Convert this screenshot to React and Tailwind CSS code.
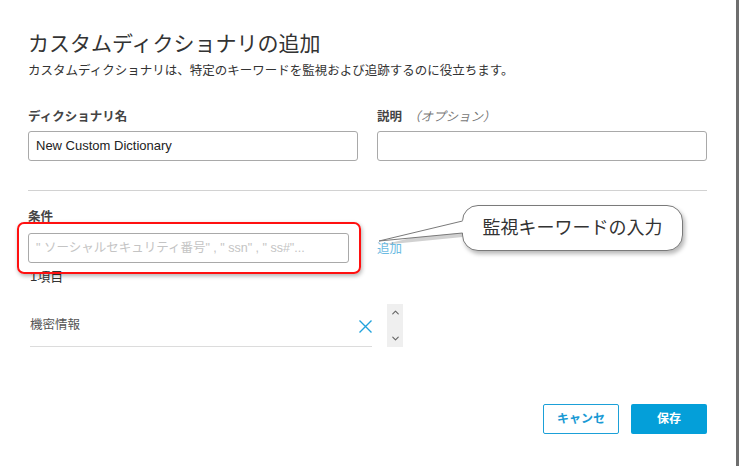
import { ChevronUp, ChevronDown } from 'lucide-react'

const font = { fontFamily: '"Liberation Sans", "Noto Sans CJK JP", sans-serif' }

function Callout() {
  return (
    <>
      <svg className="absolute left-[370px] top-[212px]" width="100" height="40" viewBox="0 0 100 40">
        <path d="M92 11 L11 31 L92 23 Z" fill="rgba(0,0,0,0.18)" transform="translate(1 2)" />
      </svg>
      <div className="absolute left-[462px] top-[205px] flex h-[46px] w-[221px] items-center justify-center rounded-[16px] border border-[#7a7a7a] bg-white shadow-[2px_3px_4px_rgba(0,0,0,0.28)]">
        <span className="text-[18px] leading-[22px] text-[#333]">監視キーワードの入力</span>
      </div>
      <svg className="absolute left-[370px] top-[212px]" width="100" height="40" viewBox="0 0 100 40">
        <path d="M96 8 L91 9 L9 29 L91 21 L96 21 Z" fill="#fff" />
        <path d="M92.5 9 L9 29 L92.5 21" fill="none" stroke="#7a7a7a" strokeWidth="1" />
      </svg>
    </>
  )
}

export default function App() {
  return (
    <div className="relative flex h-[466px] w-[739px] overflow-hidden bg-white" style={font}>
      <div className="flex-1 pl-[28px] pr-[29px] pt-[31px]">
        <h1 className="text-[21px] font-normal leading-[26px] text-[#333]">カスタムディクショナリの追加</h1>
        <p className="mt-[5px] text-[12.5px] leading-[18px] text-[#333]">
          カスタムディクショナリは、特定のキーワードを監視および追跡するのに役立ちます。
        </p>

        <div className="mt-[28px] grid grid-cols-2 gap-x-[19px]">
          <div>
            <label className="block text-[12.5px] font-bold leading-[18px] text-[#444]">ディクショナリ名</label>
            <div className="mt-[5px] flex h-[30px] items-center rounded-[3px] border border-[#a9a9a9] px-[7px] text-[13px] text-[#222]">
              New Custom Dictionary
            </div>
          </div>
          <div>
            <label className="block text-[12.5px] leading-[18px] text-[#444]">
              <span className="font-bold">説明</span>
              <span className="ml-[6px] italic text-[#777]">（オプション）</span>
            </label>
            <div className="mt-[5px] h-[30px] rounded-[3px] border border-[#a9a9a9]" />
          </div>
        </div>

        <div className="mt-[29px] h-px bg-[#d2d2d2]" />

        <label className="mt-[17px] block text-[12.5px] font-bold leading-[18px] text-[#444]">条件</label>
        <div className="mt-[7px] flex items-center">
          <div className="flex h-[30px] w-[321px] items-center whitespace-pre rounded-[3px] border border-[#a9a9a9] px-[7px] text-[12.5px] text-[#c4c4c4]">
            {'" ソーシャルセキュリティ番号" , " ssn" , " ss#"...'}
          </div>
          <span className="ml-[28px] mt-[3px] text-[12.5px] text-[#6cbbe2]">追加</span>
        </div>

        <p className="ml-[2px] mt-[5px] text-[13px] leading-[18px] text-[#333]">1項目</p>

        <div className="mt-[18px] flex items-start">
          <div className="ml-[2px] flex h-[43px] w-[342px] items-center justify-between border-b border-[#dcdcdc]">
            <span className="text-[12.5px] text-[#555]">機密情報</span>
            <svg width="13" height="13" viewBox="0 0 13 13" className="mt-[2px]">
              <path d="M0.5 0.5 L12.5 12.5 M12.5 0.5 L0.5 12.5" stroke="#22a2dc" strokeWidth="1.4" fill="none" />
            </svg>
          </div>
          <div className="ml-[15px] flex h-[43px] w-[16px] flex-col items-center justify-between bg-[#efefef] py-[3px]">
            <ChevronUp size={11} strokeWidth={2.5} className="text-[#666]" />
            <ChevronDown size={11} strokeWidth={2.5} className="text-[#666]" />
          </div>
        </div>

        <div className="mt-[57px] flex justify-end gap-[12px]">
          <button
            type="button"
            className="h-[30px] w-[76px] rounded-[2px] border border-[#1ba0d8] bg-white text-[12px] font-bold text-[#1a9ad4]"
          >
            キャンセ
          </button>
          <button
            type="button"
            className="h-[30px] w-[76px] rounded-[2px] bg-[#049fd9] text-[12px] font-bold text-white"
          >
            保存
          </button>
        </div>
      </div>
      <div className="w-[3px] bg-[#6e6e6e]" />

      <div className="pointer-events-none absolute left-[17px] top-[222px] h-[52px] w-[344px] rounded-[7px] border-2 border-[#ff1010] shadow-[1px_2px_4px_rgba(0,0,0,0.3)]" />
      <Callout />
    </div>
  )
}
